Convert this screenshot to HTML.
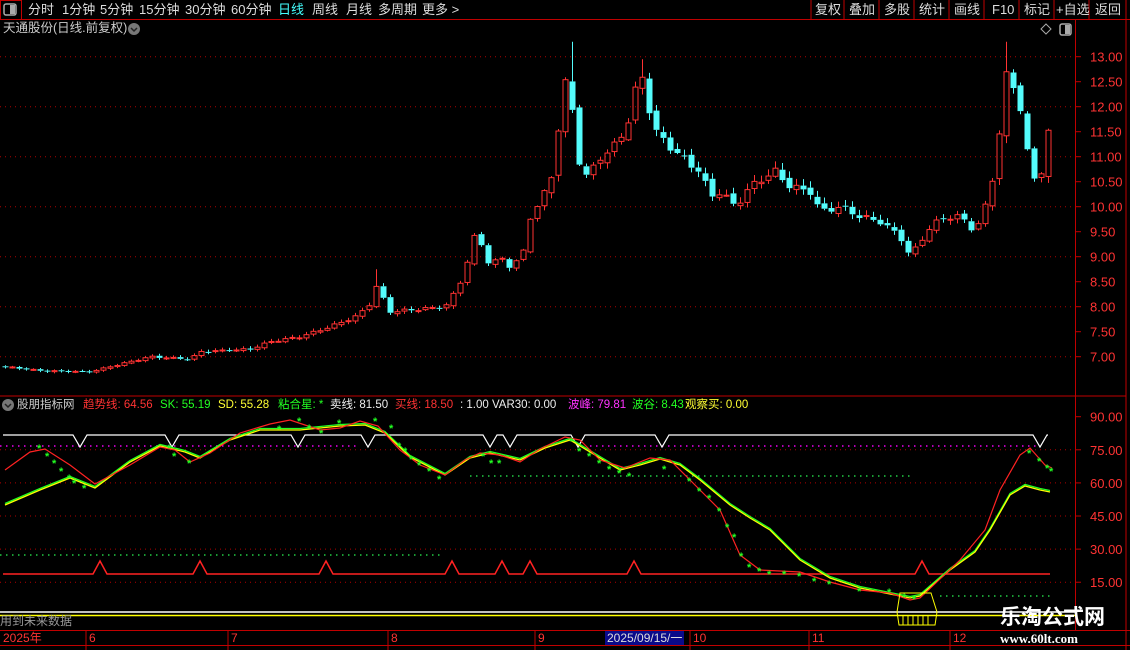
<!DOCTYPE html>
<html><head><meta charset="utf-8"><style>
html,body{margin:0;padding:0;background:#000;width:1130px;height:650px;overflow:hidden}
body{font-family:"Liberation Sans","Noto Sans CJK SC",sans-serif;position:relative}
.t{position:absolute;white-space:nowrap;font-size:13px;line-height:15px}
.h{font-size:11.5px;top:398px}
svg{position:absolute;left:0;top:0}
</style></head><body>
<svg id="s" width="1130" height="650" xmlns="http://www.w3.org/2000/svg">
<g id="grid"></g><g id="cd"></g><g id="ind"></g>
<line x1="0" y1="19.5" x2="1130" y2="19.5" stroke="#c00000"/>
<rect x="0.5" y="0.5" width="21" height="19" fill="none" stroke="#c00000"/>
<rect x="4" y="4" width="12" height="11" rx="2" fill="none" stroke="#aaa" stroke-width="1.5"/><rect x="10" y="5" width="5" height="9" fill="#aaa"/>
<g stroke="#c00000"><line x1="811" y1="0" x2="811" y2="19"/><line x1="844" y1="0" x2="844" y2="19"/><line x1="879" y1="0" x2="879" y2="19"/><line x1="914" y1="0" x2="914" y2="19"/><line x1="949" y1="0" x2="949" y2="19"/><line x1="984" y1="0" x2="984" y2="19"/><line x1="1019" y1="0" x2="1019" y2="19"/><line x1="1054" y1="0" x2="1054" y2="19"/><line x1="1089" y1="0" x2="1089" y2="19"/><line x1="1126" y1="0" x2="1126" y2="650"/></g>
<circle cx="134" cy="29" r="6" fill="#777"/><path d="M131 28l3 3 3-3" stroke="#222" fill="none" stroke-width="1.5"/>
<path d="M1046 24l5 5-5 5-5-5z" fill="none" stroke="#aaa"/>
<rect x="1060" y="24" width="11" height="11" rx="2" fill="none" stroke="#aaa" stroke-width="1.5"/><rect x="1065" y="25" width="5" height="9" fill="#aaa"/>
<line x1="1075.5" y1="20" x2="1075.5" y2="630" stroke="#c00000"/>
<line x1="0" y1="396" x2="1126" y2="396" stroke="#c00000"/>
<circle cx="8" cy="405" r="6" fill="#777"/><path d="M5 404l3 3 3-3" stroke="#222" fill="none" stroke-width="1.5"/>
<line x1="0" y1="612" x2="1075" y2="612" stroke="#fff" stroke-width="1.5"/>
<line x1="0" y1="615.5" x2="1075" y2="615.5" stroke="#ff0" stroke-width="1.5"/>
<line x1="0" y1="630.5" x2="1130" y2="630.5" stroke="#c00000"/>
<line x1="0" y1="645.5" x2="1130" y2="645.5" stroke="#c00000"/>
<g stroke="#c00000"><line x1="86" y1="630" x2="86" y2="650"/><line x1="228" y1="630" x2="228" y2="650"/><line x1="388" y1="630" x2="388" y2="650"/><line x1="535" y1="630" x2="535" y2="650"/><line x1="690" y1="630" x2="690" y2="650"/><line x1="809" y1="630" x2="809" y2="650"/><line x1="950" y1="630" x2="950" y2="650"/></g>
<rect x="605" y="631" width="79" height="14" fill="#0a0a8a"/>
<path d="M900 593H931L937 612L935 625H899L897 612Z" fill="none" stroke="#ff0"/>
<g stroke="#ff0"><line x1="903" y1="616" x2="903" y2="625"/><line x1="908" y1="616" x2="908" y2="625"/><line x1="913" y1="616" x2="913" y2="625"/><line x1="918" y1="616" x2="918" y2="625"/><line x1="923" y1="616" x2="923" y2="625"/><line x1="928" y1="616" x2="928" y2="625"/></g>
</svg>

<div class="t" style="left:28px;top:2px;color:#ddd">分时</div>
<div class="t" style="left:62px;top:2px;color:#ddd">1分钟</div>
<div class="t" style="left:100px;top:2px;color:#ddd">5分钟</div>
<div class="t" style="left:139px;top:2px;color:#ddd">15分钟</div>
<div class="t" style="left:185px;top:2px;color:#ddd">30分钟</div>
<div class="t" style="left:231px;top:2px;color:#ddd">60分钟</div>
<div class="t" style="left:278px;top:2px;color:#4ff">日线</div>
<div class="t" style="left:312px;top:2px;color:#ddd">周线</div>
<div class="t" style="left:346px;top:2px;color:#ddd">月线</div>
<div class="t" style="left:378px;top:2px;color:#ddd">多周期</div>
<div class="t" style="left:422px;top:2px;color:#ddd">更多 &gt;</div>
<div class="t" style="left:815px;top:2px;color:#ddd">复权</div>
<div class="t" style="left:849px;top:2px;color:#ddd">叠加</div>
<div class="t" style="left:884px;top:2px;color:#ddd">多股</div>
<div class="t" style="left:919px;top:2px;color:#ddd">统计</div>
<div class="t" style="left:954px;top:2px;color:#ddd">画线</div>
<div class="t" style="left:992px;top:2px;color:#ddd">F10</div>
<div class="t" style="left:1024px;top:2px;color:#ddd">标记</div>
<div class="t" style="left:1056px;top:2px;color:#ddd">+自选</div>
<div class="t" style="left:1095px;top:2px;color:#ddd">返回</div>
<div class="t" style="left:3px;top:21px;color:#ccc;font-size:12.5px">天通股份(日线.前复权)</div>

<div class="t h" style="left:17px;color:#ccc">股朋指标网</div>
<div class="t h" style="left:83px;color:#f33">趋势线: 64.56</div>
<div class="t h" style="left:160px;color:#2f2">SK: 55.19</div>
<div class="t h" style="left:218px;color:#ff3">SD: 55.28</div>
<div class="t h" style="left:278px;color:#2f2">粘合星: *</div>
<div class="t h" style="left:330px;color:#eee">卖线: 81.50</div>
<div class="t h" style="left:395px;color:#f33">买线: 18.50</div>
<div class="t h" style="left:460px;color:#eee">: 1.00 VAR30: 0.00</div>
<div class="t h" style="left:568px;color:#f3f">波峰: 79.81</div>
<div class="t h" style="left:632px;color:#2f2">波谷: 8.43</div>
<div class="t h" style="left:685px;color:#ff3">观察买: 0.00</div>

<div class="t" style="left:0px;top:614px;font-size:12px;color:#999">用到未来数据</div>
<div class="t" style="left:3px;top:631px;font-size:12px;color:#f33">2025年</div>
<div class="t" style="left:89px;top:631px;font-size:12px;color:#f33">6</div>
<div class="t" style="left:231px;top:631px;font-size:12px;color:#f33">7</div>
<div class="t" style="left:391px;top:631px;font-size:12px;color:#f33">8</div>
<div class="t" style="left:538px;top:631px;font-size:12px;color:#f33">9</div>
<div class="t" style="left:607px;top:631px;font-size:12px;color:#ddd">2025/09/15/一</div>
<div class="t" style="left:693px;top:631px;font-size:12px;color:#f33">10</div>
<div class="t" style="left:812px;top:631px;font-size:12px;color:#f33">11</div>
<div class="t" style="left:953px;top:631px;font-size:12px;color:#f33">12</div>
<div class="t" style="left:1000px;top:606px;font-size:21px;line-height:24px;font-weight:bold;color:#fff">乐淘公式网</div>
<div class="t" style="left:1000px;top:631px;font-size:13px;font-family:'Liberation Serif',serif;font-weight:bold;color:#fff">www.60lt.com</div>

<script>
var NS="http://www.w3.org/2000/svg";
function el(p,t,a){var e=document.createElementNS(NS,t);for(var k in a)e.setAttribute(k,a[k]);p.appendChild(e);return e;}
function txt(x,y,s,c){var e=el(document.getElementById('s'),'text',{x:x,y:y,fill:c,'font-size':13,'font-family':'Liberation Sans,sans-serif'});e.textContent=s;}
var g=document.getElementById('grid');
function py(p){return 56.7+(13-p)*50;}
function iy(v){return 416.7+(90-v)*2.207;}
for(var p=7;p<=13;p++){el(g,'line',{x1:0,x2:1075,y1:py(p),y2:py(p),stroke:'#b00000','stroke-dasharray':'1 4'});}
for(var p=7;p<=13.01;p+=0.5){var y=py(p);el(g,'line',{x1:1075,x2:1081,y1:y,y2:y,stroke:'#c00000'});txt(1090,y+5,p.toFixed(2),'#f33');}
[75,60,45,30,15].forEach(function(v){el(g,'line',{x1:0,x2:1075,y1:iy(v),y2:iy(v),stroke:'#b00000','stroke-dasharray':'1 4'});});
[90,75,60,45,30,15].forEach(function(v){var y=iy(v);el(g,'line',{x1:1075,x2:1081,y1:y,y2:y,stroke:'#c00000'});txt(1090,y+5,v.toFixed(2),'#f33');});
var K=[[5,6.8],[40,6.72],[90,6.7],[130,6.9],[150,7.0],[190,6.95],[200,7.1],[250,7.15],[270,7.3],[300,7.4],[330,7.6],[355,7.8],[368,8.0],[376,8.4],[390,7.9],[420,7.95],[445,8.0],[455,8.3],[465,8.7],[472,9.4],[480,9.3],[490,8.8],[500,9.0],[510,8.8],[522,9.0],[530,9.8],[540,10.1],[550,10.5],[556,11.2],[562,12.3],[568,12.6],[574,11.6],[582,10.5],[590,10.7],[600,11.0],[610,11.1],[620,11.4],[630,11.8],[640,12.8],[647,12.1],[655,11.5],[670,11.2],[680,11.0],[700,10.7],[710,10.2],[720,10.3],[735,10.0],[750,10.4],[765,10.6],[775,10.7],[790,10.4],[810,10.3],[820,9.9],[840,10.0],[860,9.8],[880,9.7],[900,9.4],[910,9.0],[920,9.3],[930,9.6],[945,9.8],[960,9.8],[975,9.5],[985,10.0],[995,10.8],[1002,12.0],[1008,12.9],[1015,12.2],[1022,11.9],[1030,10.6],[1037,10.5],[1044,10.9],[1050,11.8]];
function interp(x){for(var i=1;i<K.length;i++)if(x<=K[i][0]){var a=K[i-1],b=K[i];return a[1]+(b[1]-a[1])*(x-a[0])/(b[0]-a[0]);}return K[K.length-1][1];}
var cd=document.getElementById('cd'),prev=6.8;
for(var i=0;i<150;i++){var x=5+i*7;var b=interp(x),sc=(b-6)/4;var c=b+Math.sin(i*1.9)*0.06*sc;var o=prev+Math.cos(i*2.3)*0.04*sc;
 var up=c>=o,col=up?'#ff3232':'#54fcfc';var hi=Math.max(o,c)+0.02+Math.abs(Math.sin(i*3.1))*0.1*sc,lo=Math.min(o,c)-0.02-Math.abs(Math.cos(i*2.7))*0.08*sc;
 if(x>=568&&x<=574)hi=13.3;if(x>=1004&&x<=1010)hi=13.3;if(x>=637&&x<=643)hi=12.95;if(x>=372&&x<=378)hi=8.75;
 el(cd,'line',{x1:x+0.5,x2:x+0.5,y1:py(hi),y2:py(Math.max(o,c)),stroke:col});el(cd,'line',{x1:x+0.5,x2:x+0.5,y1:py(Math.min(o,c)),y2:py(lo),stroke:col});
 var t=py(Math.max(o,c)),h=Math.max(1,Math.abs(py(o)-py(c)));
 if(up)el(cd,'rect',{x:x-2,y:t,width:5,height:h,fill:'none',stroke:col});else el(cd,'rect',{x:x-2.5,y:t,width:6,height:h,fill:col});
 prev=c;}
var ind=document.getElementById('ind');
function line(y,x1,x2,c,d){el(ind,'line',{x1:x1,x2:x2,y1:y,y2:y,stroke:c,'stroke-dasharray':d||'','stroke-width':d?1.5:1});}
line(446,0,360,'#e0e','1.5 4.5');line(446,590,1040,'#e0e','1.5 4.5');line(476,470,910,'#2c4','1.5 4.5');line(555,0,440,'#2c4','1.5 4.5');line(596,940,1050,'#2c4','1.5 4.5');
function pl(pts,c,w){el(ind,'polyline',{points:pts.map(function(p){return p.join(',')}).join(' '),fill:'none',stroke:c,'stroke-width':w||1});}
var W=[[3,435]];[80,172,298,368,490,510,578,662,1040].forEach(function(x){W.push([x-7,435],[x,447],[x+7,435]);});W.push([1048,435]);pl(W,'#fff',1.2);
var R=[[3,574]];[100,200,326,452,502,530,634,922].forEach(function(x){R.push([x-7,574],[x,561],[x+7,574]);});R.push([1050,574]);pl(R,'#f22',1.5);
var SD=[[5,505],[40,490],[70,478],[95,488],[130,462],[160,446],[185,452],[200,458],[230,440],[260,430],[300,430],[340,426],[365,425],[385,433],[410,457],[445,475],[470,458],[490,453],[520,460],[545,448],[570,440],[600,458],[620,470],[640,465],[660,459],[680,465],[700,480],[730,505],[750,518],[770,530],[800,560],[830,578],[860,588],[890,594],[910,598],[920,596],[950,570],[975,552],[990,530],[1010,495],[1025,486],[1040,490],[1050,492]];
pl(SD.map(function(p){return [p[0],p[1]-1.5]}),'#2f2',1.3);pl(SD,'#ff0',1.3);
var TR=[[5,470],[30,452],[45,449],[70,465],[95,484],[130,465],[160,447],[175,450],[190,462],[210,453],[240,433],[270,424],[290,420],[320,430],[340,428],[360,421],[378,426],[400,450],[420,465],[445,475],[465,460],[480,453],[500,455],[520,462],[540,449],[565,437],[580,440],[600,460],[625,468],[650,458],[670,460],[700,490],[720,510],[740,555],[760,570],[800,572],[830,582],[860,590],[890,593],[910,600],[920,598],[960,560],[985,530],[1000,490],[1020,455],[1030,448],[1045,465],[1052,468]];
pl(TR,'#f22',1.2);
var ST=[[40,447],[48,455],[55,462],[62,470],[70,477],[75,482],[85,487],[170,447],[175,455],[190,462],[280,428],[300,420],[310,427],[322,432],[340,422],[376,420],[392,427],[400,445],[406,450],[412,458],[420,464],[430,470],[440,478],[484,455],[492,462],[500,462],[572,440],[580,450],[590,455],[600,462],[610,468],[620,472],[630,475],[665,468],[690,480],[700,490],[710,497],[720,510],[728,526],[735,536],[742,555],[750,566],[760,570],[770,573],[785,573],[800,575],[815,580],[830,583],[860,590],[890,591],[905,596],[915,598],[1030,452],[1040,460],[1048,467],[1052,470]];
ST.forEach(function(p){var t=el(ind,'text',{x:p[0]-3,y:p[1]+5,fill:'#2f2','font-size':11,'font-weight':'bold','font-family':'Liberation Sans,sans-serif'});t.textContent='*';});
</script>
</body></html>
